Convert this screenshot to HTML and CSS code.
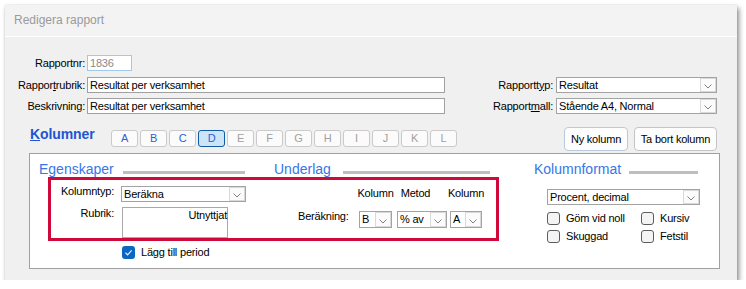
FILE: index.html
```html
<!DOCTYPE html>
<html lang="sv">
<head>
    <meta charset="UTF-8">
    <title>Redigera rapport</title>
    <link rel="stylesheet" href="styles.css">
</head>
<body>
    <div class="window">
        <div class="titlebar">Redigera rapport</div>

        <div class="head-form">
            <label class="lbl">Rapportnr:</label>
            <input class="textbox nr" type="text" value="1836" readonly>

            <label class="lbl">Rappor<u>t</u>rubrik:</label>
            <input class="textbox" type="text" value="Resultat per verksamhet">
            <label class="lbl right">Rapportt<u>y</u>p:</label>
            <div class="combo">
                <span class="combo-text">Resultat</span>
                <span class="combo-btn"><svg width="8" height="5" viewBox="0 0 8 5"><path d="M0.5 0.5 L4 4 L7.5 0.5" fill="none" stroke="#808080"/></svg></span>
            </div>

            <label class="lbl">Beskrivning:</label>
            <input class="textbox" type="text" value="Resultat per verksamhet">
            <label class="lbl right">Rapport<u>m</u>all:</label>
            <div class="combo">
                <span class="combo-text">Stående A4, Normal</span>
                <span class="combo-btn"><svg width="8" height="5" viewBox="0 0 8 5"><path d="M0.5 0.5 L4 4 L7.5 0.5" fill="none" stroke="#808080"/></svg></span>
            </div>
        </div>

        <div class="col-bar">
            <div class="col-title"><u>K</u>olumner</div>
            <div class="tabs">
                <span class="tab">A</span>
                <span class="tab">B</span>
                <span class="tab">C</span>
                <span class="tab on">D</span>
                <span class="tab off">E</span>
                <span class="tab off">F</span>
                <span class="tab off">G</span>
                <span class="tab off">H</span>
                <span class="tab off">I</span>
                <span class="tab off">J</span>
                <span class="tab off">K</span>
                <span class="tab off">L</span>
            </div>
            <div class="col-buttons">
                <button class="btn btn-new">Ny kolumn</button>
                <button class="btn btn-del">Ta bort kolumn</button>
            </div>
        </div>

        <div class="panel">
            <div class="sect-row">
                <div class="sect s1"><span>Egenskaper</span><i class="rule"></i></div>
                <div class="sect s2"><span>Underlag</span><i class="rule"></i></div>
                <div class="sect s3"><span>Kolumnformat</span><i class="rule"></i></div>
            </div>

            <div class="panel-body">
                <div class="highlight">
                    <div class="props">
                        <span class="plbl first">Kolumntyp:</span>
                        <div class="combo">
                            <span class="combo-text">Beräkna</span>
                            <span class="combo-btn"><svg width="8" height="5" viewBox="0 0 8 5"><path d="M0.5 0.5 L4 4 L7.5 0.5" fill="none" stroke="#808080"/></svg></span>
                        </div>
                        <span class="plbl">Rubrik:</span>
                        <div class="memo">Utnyttjat</div>
                    </div>

                    <div class="calc">
                        <div class="calc-head">
                            <span class="ch-space"></span>
                            <span class="ch c1">Kolumn</span>
                            <span class="ch c2">Metod</span>
                            <span class="ch c3">Kolumn</span>
                        </div>
                        <div class="calc-row">
                            <span class="calc-lbl">Beräkning:</span>
                            <div class="combo small c1">
                                <span class="combo-text">B</span>
                                <span class="combo-btn"><svg width="8" height="5" viewBox="0 0 8 5"><path d="M0.5 0.5 L4 4 L7.5 0.5" fill="none" stroke="#808080"/></svg></span>
                            </div>
                            <div class="combo small c2">
                                <span class="combo-text">% av</span>
                                <span class="combo-btn"><svg width="8" height="5" viewBox="0 0 8 5"><path d="M0.5 0.5 L4 4 L7.5 0.5" fill="none" stroke="#808080"/></svg></span>
                            </div>
                            <div class="combo small c3">
                                <span class="combo-text">A</span>
                                <span class="combo-btn"><svg width="8" height="5" viewBox="0 0 8 5"><path d="M0.5 0.5 L4 4 L7.5 0.5" fill="none" stroke="#808080"/></svg></span>
                            </div>
                        </div>
                    </div>
                </div>

                <div class="format">
                    <div class="combo">
                        <span class="combo-text">Procent, decimal</span>
                        <span class="combo-btn"><svg width="8" height="5" viewBox="0 0 8 5"><path d="M0.5 0.5 L4 4 L7.5 0.5" fill="none" stroke="#808080"/></svg></span>
                    </div>
                    <div class="checks">
                        <label class="chk"><span class="box"></span>Göm vid noll</label>
                        <label class="chk"><span class="box"></span>Kursiv</label>
                        <label class="chk"><span class="box"></span>Skuggad</label>
                        <label class="chk"><span class="box"></span>Fetstil</label>
                    </div>
                </div>
            </div>

            <label class="chk period">
                <span class="box on"><svg width="13" height="13" viewBox="0 0 13 13"><path d="M3.5 6.8 L5.6 8.8 L9.6 4.4" fill="none" stroke="#e6eefa" stroke-width="1.2"/></svg></span>Lägg till period
            </label>
        </div>
    </div>
</body>
</html>
```

FILE: styles.css
```css
body {
    margin: 0;
    background-color: #fff;
    font-family: "Liberation Sans", Arial, sans-serif;
    font-size: 11px;
    letter-spacing: -0.2px;
    color: #000;
}
.window {
    width: 732px;
    height: 275px;
    margin: 5px 0 0 5px;
    background-color: #f0f0f0;
    box-shadow: 2px 3px 5px rgba(0,0,0,0.45), 0 0 1px rgba(0,0,0,0.2);
}
.titlebar {
    height: 31px;
    line-height: 31px;
    padding-left: 9px;
    background-color: #f3f3f3;
    border-bottom: 1px solid #fff;
    color: #9a9a9a;
    font-size: 12px;
    letter-spacing: 0;
}

/* övre formuläret */
.head-form {
    display: grid;
    grid-template-columns: 77px 358px 1fr 73px 161px;
    grid-template-rows: 17px 16px 16px;
    row-gap: 5px;
    align-items: center;
    margin: 18px 20px 0 5px;
}
.lbl {
    grid-column: 1;
    text-align: right;
    padding-right: 2px;
    line-height: 13px;
}
.lbl.right {
    grid-column: 4;
    padding-right: 3px;
}
.head-form .textbox {
    grid-column: 2;
}
.head-form .combo {
    grid-column: 5;
}
.textbox {
    box-sizing: border-box;
    width: 100%;
    height: 16px;
    margin: 0;
    padding: 0 2px;
    border: 1px solid #a0a0a0;
    background: #fff;
    font: inherit;
    letter-spacing: inherit;
    color: #000;
    outline: none;
}
.textbox.nr {
    width: 45px;
    align-self: start;
    border-color: #9fc9ee;
    color: #8a8a8a;
}

/* rullgardin */
.combo {
    box-sizing: border-box;
    display: flex;
    height: 16px;
    border: 1px solid #a3a3a3;
    background: #fff;
}
.combo-text {
    flex: 1;
    padding-left: 2px;
    line-height: 14px;
    white-space: nowrap;
    overflow: hidden;
}
.combo-btn {
    box-sizing: border-box;
    width: 16px;
    border: 1px solid #d9d9d9;
    background: #fbfbfb;
    display: flex;
    align-items: center;
    justify-content: center;
    padding-top: 3px;
}
.combo.small {
    height: 17px;
}
.combo.small .combo-text {
    line-height: 15px;
}

/* kolumnflikar */
.col-bar {
    display: flex;
    align-items: flex-start;
    height: 24px;
    margin: 13px 20px 0 25px;
}
.col-title {
    width: 81px;
    margin-top: -1px;
    font-size: 14px;
    font-weight: bold;
    line-height: 16px;
    letter-spacing: -0.1px;
    color: #1f55d0;
}
.tabs {
    display: flex;
    gap: 2px;
    margin-top: 3px;
}
.tab {
    box-sizing: border-box;
    width: 27px;
    height: 17px;
    border: 1px solid #cacaca;
    border-radius: 3px;
    background-color: #fbfbfb;
    text-align: center;
    line-height: 15px;
    color: #2b5fd6;
}
.tab.off {
    color: #a0a0a0;
}
.tab.on {
    background-color: #cce4f7;
    border-color: #0f5aa0;
}
.col-buttons {
    display: flex;
    gap: 6px;
    margin-left: auto;
}
.btn {
    box-sizing: border-box;
    height: 24px;
    padding: 0;
    border: 1px solid #c4c4c4;
    border-radius: 4px;
    background-color: #fdfdfd;
    font: inherit;
    letter-spacing: inherit;
    color: #000;
}
.btn-new {
    width: 64px;
    border-color: #b8cadc;
}
.btn-del {
    width: 83px;
}

/* panelen */
.panel {
    box-sizing: border-box;
    height: 116px;
    margin: 2px 17px 0 24px;
    padding-top: 8px;
    border: 1px solid #a0a0a0;
    background-color: #fff;
}
.sect-row {
    display: flex;
    height: 15px;
    line-height: 15px;
    font-size: 14px;
    letter-spacing: 0;
    color: #3576e8;
}
.sect {
    display: flex;
    align-items: flex-start;
}
.rule {
    flex: 1;
    height: 3px;
    margin-top: 9px;
    background-color: #bebebe;
}
.s1 { width: 206px; margin-left: 9px; }
.s1 .rule { margin-left: 9px; }
.s2 { width: 216px; margin-left: 29px; }
.s2 .rule { margin-left: 12px; }
.s3 { width: 164px; margin-left: 44px; }
.s3 .rule { margin-left: 8px; }

.panel-body {
    display: flex;
    align-items: flex-start;
}
.highlight {
    position: relative;
    box-sizing: border-box;
    display: flex;
    align-items: flex-start;
    width: 451px;
    height: 64px;
    margin-left: 18px;
    border: 3px solid #cf0a3a;
}
.props {
    display: grid;
    grid-template-columns: 63px 125px;
    column-gap: 7px;
    row-gap: 5px;
    padding-top: 6px;
}
.plbl {
    text-align: right;
    line-height: 13px;
}
.plbl.first {
    margin-top: -1px;
}
.memo {
    box-sizing: border-box;
    width: 106px;
    height: 31px;
    margin-left: 1px;
    padding-top: 1px;
    border: 1px solid #a8a8a8;
    text-align: right;
    line-height: 13px;
}
.calc {
    margin-left: 52px;
}
.calc-head {
    display: flex;
    height: 13px;
    padding-top: 7px;
    line-height: 13px;
}
.ch-space {
    width: 61px;
}
.ch {
    display: flex;
    justify-content: center;
    white-space: nowrap;
}
.c1 { width: 33px; margin-right: 5px; }
.c2 { width: 50px; margin-right: 3px; }
.c3 { width: 32px; }
.ch.c2 {
    box-sizing: border-box;
    padding-right: 13px;
}
.calc-row {
    display: flex;
    align-items: flex-start;
    margin-top: 11px;
}
.calc-lbl {
    width: 50px;
    margin-right: 11px;
    margin-top: -1px;
    text-align: right;
    line-height: 13px;
}
.format {
    width: 153px;
    margin-left: 48px;
    margin-top: 12px;
}
.checks {
    display: grid;
    grid-template-columns: 94px auto;
    row-gap: 5px;
    margin-top: 7px;
}
.chk {
    display: flex;
    align-items: center;
    height: 13px;
    line-height: 13px;
    white-space: nowrap;
}
.box {
    box-sizing: border-box;
    width: 13px;
    height: 13px;
    margin-right: 6px;
    border: 1px solid #5c5c5c;
    border-radius: 3px;
    background-color: #f4f4f4;
}
.box.on {
    border: none;
    background-color: #0b67c2;
}
.box svg {
    display: block;
}
.period {
    margin: 3px 0 0 92px;
}
```
